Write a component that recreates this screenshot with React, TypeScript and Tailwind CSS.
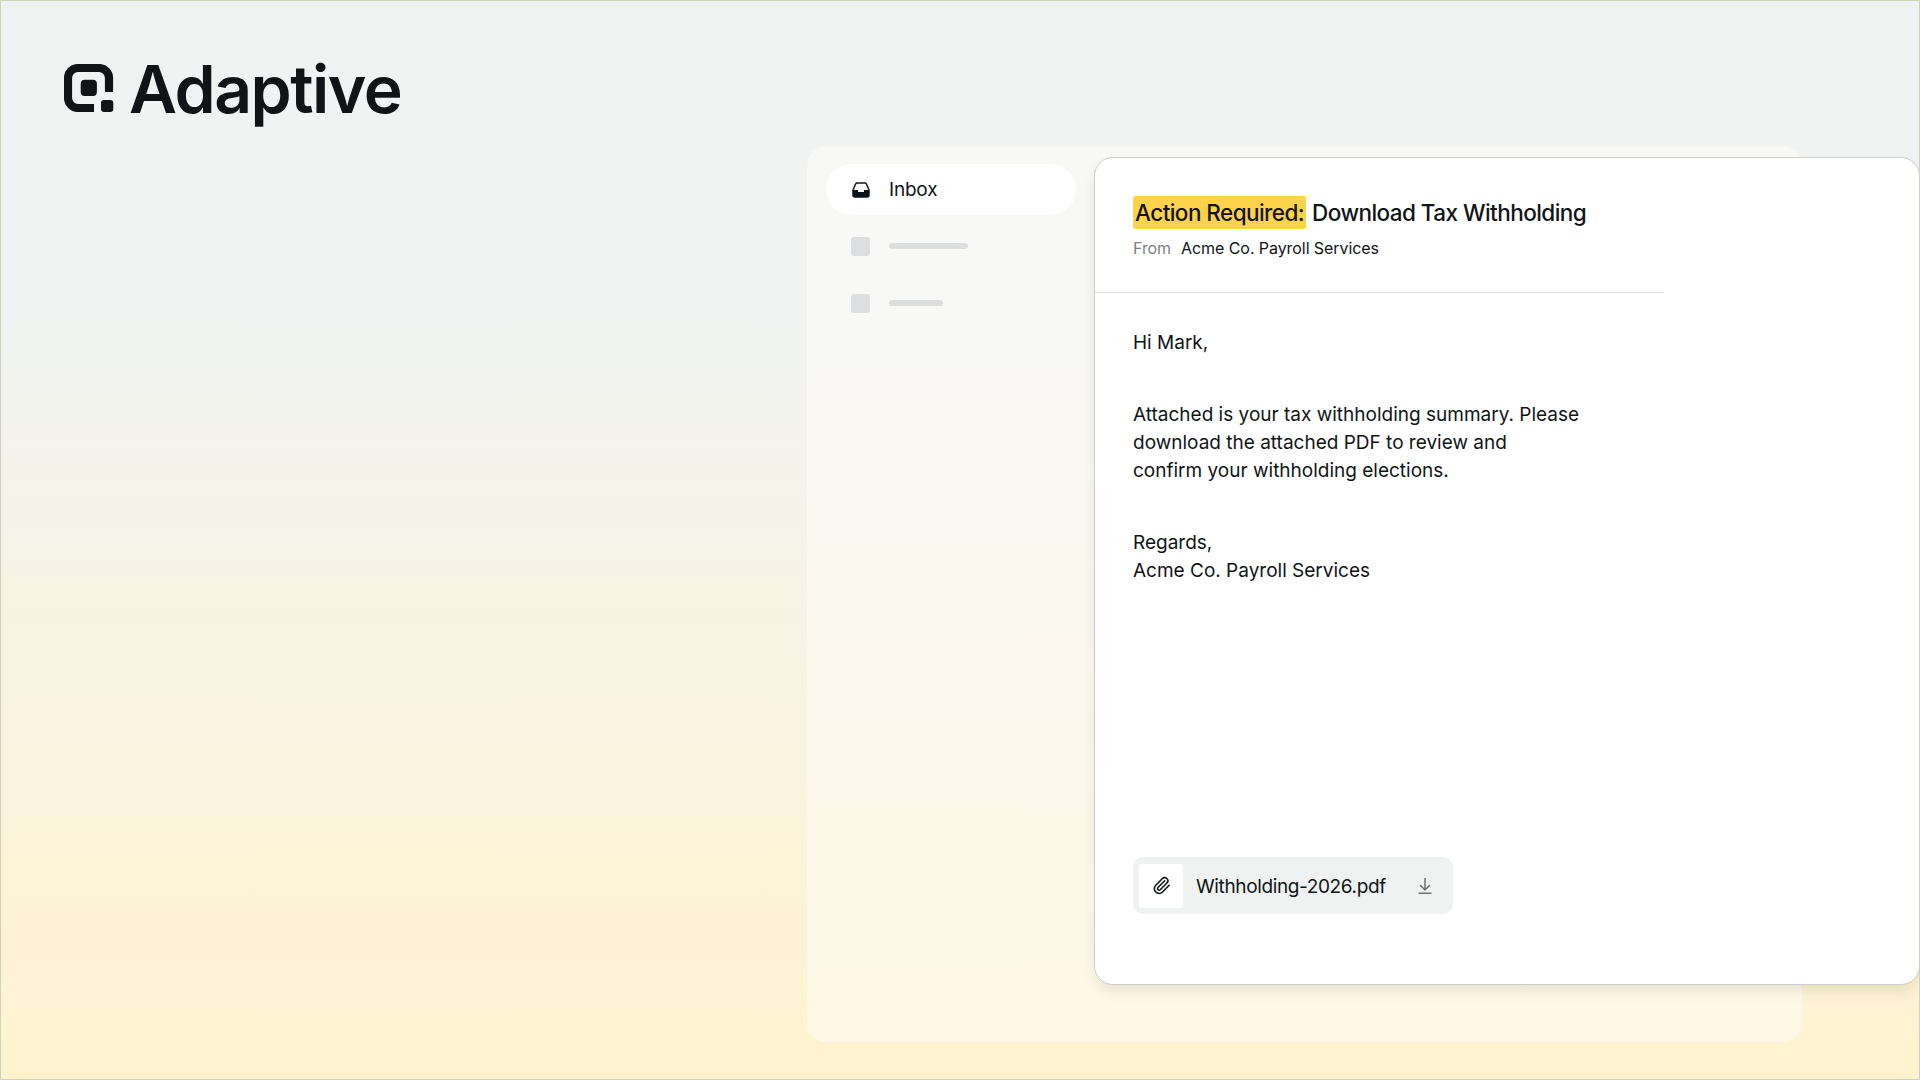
import { Paperclip } from "lucide-react";

const Logo: React.FC = () => {
  return (
    <div className="flex items-start">
      <svg className="mt-[12px] w-[50px] h-[48px]" viewBox="0 0 50 48" fill="none">
        <path
          d="M30 44H14A10 10 0 0 1 4 34V14A10 10 0 0 1 14 4H35A10 10 0 0 1 45 14V28"
          stroke="#101416"
          strokeWidth="8.2"
        />
        <rect x="16.7" y="15.8" width="16.2" height="16.2" rx="4" fill="#101416" />
        <rect x="37" y="36" width="12.3" height="12" rx="3" fill="#101416" />
      </svg>
      <span className="mt-px ml-[15px] text-[66px] leading-[72px] font-[560] tracking-[-1.5px] text-[#101416]">
        Adaptive
      </span>
    </div>
  );
};

const InboxIcon: React.FC = () => {
  return (
    <svg className="w-[18px] h-4" viewBox="0 0 18 16">
      <path
        d="M5 1H13Q14 1 14.4 2L17 8V13.2A1.8 1.8 0 0 1 15.2 15H2.8A1.8 1.8 0 0 1 1 13.2V8L3.6 2Q4 1 5 1Z"
        fill="none"
        stroke="#101416"
        strokeWidth="1.5"
        strokeLinejoin="round"
      />
      <path
        d="M1 8H6V10H12V8H17V13.2A1.8 1.8 0 0 1 15.2 15H2.8A1.8 1.8 0 0 1 1 13.2Z"
        fill="#101416"
      />
    </svg>
  );
};

const DownloadIcon: React.FC = () => {
  return (
    <svg className="w-[14px] h-4" viewBox="0 0 14 16" fill="none" stroke="#6f7372" strokeWidth="1.5">
      <path d="M7 0V11.5M2 7L7 12L12 7M0.5 15.2H13.5" />
    </svg>
  );
};

const Sidebar: React.FC = () => {
  return (
    <aside className="shrink-0 w-[250px] mt-[18px] ml-[19px]">
      <div className="flex items-center h-[51px] pl-[26px] rounded-full bg-white">
        <InboxIcon />
        <span className="mt-[2px] ml-[19px] text-[19px] tracking-[-0.2px]">Inbox</span>
      </div>
      <div className="flex items-start mt-[22px] ml-[25px]">
        <div className="size-[19px] rounded-[3px] bg-[#dddee0]" />
        <div className="mt-[6px] ml-[19px] w-[79px] h-[6px] rounded-[3px] bg-[#dddee0]" />
      </div>
      <div className="flex items-start mt-[38px] ml-[25px]">
        <div className="size-[19px] rounded-[3px] bg-[#dddee0]" />
        <div className="mt-[6px] ml-[19px] w-[54px] h-[6px] rounded-[3px] bg-[#dddee0]" />
      </div>
    </aside>
  );
};

const Message: React.FC = () => {
  return (
    <article className="shrink-0 flex flex-col w-[826px] h-[828px] mt-[11px] ml-[18px] rounded-[19px] border border-[#cdd0ca] bg-white shadow-[0_8px_14px_-2px_rgba(60,70,60,0.12)]">
      <header className="w-[568px] h-[135px] pt-[38px] pl-[38px] border-b border-[#e2e4e3]">
        <h1 className="flex items-center text-[22.5px] leading-[33px] font-medium tracking-[-0.56px] whitespace-nowrap">
          <span className="h-[33px] px-[2px] rounded-[3px] bg-[#ffd24b]">
            Action Required:
          </span>
          <span className="ml-[6px]">Download Tax Withholding</span>
        </h1>
        <p className="flex mt-[7px] text-[16px] leading-[24px] tracking-[-0.07px]">
          <span className="text-[#7d807f]">From</span>
          <span className="ml-[10px]">Acme Co. Payroll Services</span>
        </p>
      </header>
      <div className="mt-[36px] ml-[38px] text-[19px] leading-[28px]">
        <p>Hi Mark,</p>
        <p className="mt-[44px]">
          Attached is your tax withholding summary. Please
          <br />
          download the attached PDF to review and
          <br />
          confirm your withholding elections.
        </p>
        <p className="mt-[44px]">
          Regards,
          <br />
          Acme Co. Payroll Services
        </p>
      </div>
      <div className="flex items-center w-[320px] h-[57px] mt-auto mb-[70px] ml-[38px] pl-[6px] rounded-[10px] bg-[#f0f2f1]">
        <div className="flex items-center justify-center size-[44px] rounded-[3px] bg-white">
          <Paperclip className="size-[19px]" strokeWidth={2} />
        </div>
        <span className="mt-[3px] ml-[13px] text-[19px] tracking-[-0.37px]">
          Withholding-2026.pdf
        </span>
        <div className="ml-auto mr-[21px]">
          <DownloadIcon />
        </div>
      </div>
    </article>
  );
};

const App: React.FC = () => {
  return (
    <main className="w-[1920px] h-[1080px] overflow-hidden border border-[#cfd2bd] bg-[linear-gradient(180deg,#f0f3f2_0%,#f0f3f2_28%,#f5f3e8_48%,#faf3de_70%,#fdf2d5_86%,#fff3cf_100%)] font-['Inter',sans-serif] text-[#101416]">
      <header className="h-[145px] pt-[51px] pl-[63px]">
        <Logo />
      </header>
      <section className="flex w-[995px] h-[896px] ml-[806px] rounded-[19px] bg-[#fffdfa]/50">
        <Sidebar />
        <Message />
      </section>
    </main>
  );
};

export default App;
